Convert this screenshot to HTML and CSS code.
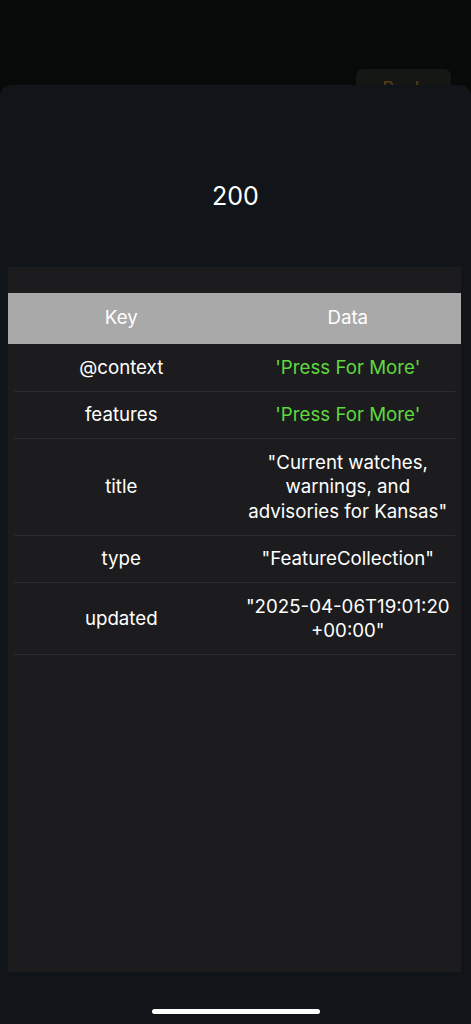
FILE: index.html
```html
<!DOCTYPE html>
<html lang="en">
<head>
<meta charset="utf-8">
<title>Response</title>
<link rel="stylesheet" href="styles.css">
</head>
<body>
<div class="screen">
  <header class="topbar">
    <button class="back-btn">Back</button>
  </header>
  <section class="sheet">
    <div class="status">200</div>
    <div class="panel">
      <div class="table">
        <div class="row head">
          <div class="cell">Key</div>
          <div class="cell">Data</div>
        </div>
        <div class="row">
          <div class="cell">@context</div>
          <div class="cell more">'Press For More'</div>
        </div>
        <div class="row">
          <div class="cell">features</div>
          <div class="cell more">'Press For More'</div>
        </div>
        <div class="row">
          <div class="cell">title</div>
          <div class="cell">"Current watches, warnings, and advisories for Kansas"</div>
        </div>
        <div class="row">
          <div class="cell">type</div>
          <div class="cell">"FeatureCollection"</div>
        </div>
        <div class="row">
          <div class="cell">updated</div>
          <div class="cell">"2025-04-06T19:01:20<wbr>+00:00"</div>
        </div>
      </div>
    </div>
    <div class="home-bar"></div>
  </section>
</div>
</body>
</html>
```
FILE: styles.css
```css
html, body {
  margin: 0;
  padding: 0;
  background: #070a08;
}
body {
  font-family: Inter, "Noto Sans", "Liberation Sans", sans-serif;
  color: #ffffff;
}
.screen {
  position: relative;
  width: 471px;
  height: 1024px;
  overflow: hidden;
}
.topbar {
  display: flex;
  justify-content: flex-end;
  padding: 69px 20px 0 0;
}
.back-btn {
  width: 95px;
  height: 40px;
  border: none;
  border-radius: 7px;
  background: #141714;
  color: #5e3c12;
  font-family: inherit;
  font-size: 18px;
  padding: 0 0 2px;
}
.sheet {
  position: absolute;
  top: 85px;
  left: 0;
  right: 0;
  bottom: 0;
  background: #11151a;
  border-radius: 11px 11px 0 0;
  display: flex;
  flex-direction: column;
}
.status {
  height: 182px;
  display: flex;
  align-items: center;
  justify-content: center;
  font-size: 25px;
  padding-top: 40px;
  box-sizing: border-box;
}
.panel {
  margin: 0 10px 0 8px;
  height: 705px;
  background: #1c1c1e;
  padding-top: 26px;
  box-sizing: border-box;
}
.table {
  display: flex;
  flex-direction: column;
}
.row {
  display: grid;
  grid-template-columns: 1fr 1fr;
  align-items: center;
  background: linear-gradient(#2b2b2d, #2b2b2d) no-repeat center bottom / calc(100% - 12px) 1px;
  padding: 11.5px 0;
}
.row.head {
  background: #a9a9a9;
  height: 51px;
  padding: 0;
  box-sizing: border-box;
}
.cell {
  text-align: center;
  font-size: 18.7px;
  line-height: 24.5px;
  padding: 0 8px;
}
.more {
  color: #5fd93f;
}
.home-bar {
  width: 168px;
  height: 5px;
  border-radius: 3px;
  background: #ffffff;
  margin: 37px auto 0;
}
```
